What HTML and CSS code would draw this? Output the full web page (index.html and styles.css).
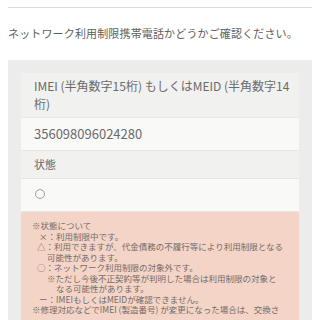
FILE: index.html
```html
<!DOCTYPE html>
<html lang="ja">
<head>
<meta charset="utf-8">
<link rel="stylesheet" href="styles.css">
</head>
<body>
<div class="page">
  <div class="rule"></div>
  <p class="intro">ネットワーク利用制限携帯電話かどうかご確認ください。</p>
  <div class="panel">
    <div class="row label">IMEI (半角数字15桁) もしくはMEID (半角数字14<br>桁)</div>
    <div class="row value num">356098096024280</div>
    <div class="row label short">状態</div>
    <div class="row value"><span class="circle"></span></div>
    <div class="notes">
      <div class="l i0">※状態について</div>
      <div class="l i1">×：利用制限中です。</div>
      <div class="l i1b">△：利用できますが、代金債務の不履行等により利用制限となる</div>
      <div class="l i2">可能性があります。</div>
      <div class="l i1b">○：ネットワーク利用制限の対象外です。</div>
      <div class="l i2">※ただし今後不正契約等が判明した場合は利用制限の対象と</div>
      <div class="l i3">なる可能性があります。</div>
      <div class="l i1">ー：IMEIもしくはMEIDが確認できません。</div>
      <div class="l i0">※修理対応などでIMEI (製造番号) が変更になった場合は、交換さ</div>
    </div>
  </div>
</div>
</body>
</html>
```

FILE: styles.css
```css
html, body {
  margin: 0;
  padding: 0;
  background: #ffffff;
}
body {
  font-family: "Noto Sans CJK JP", "Noto Sans", sans-serif;
  color: #666666;
  height: 320px;
  overflow: hidden;
}
.page {
  padding: 7px 8px 0 8px;
}
.rule {
  border-top: 1px solid #dcdcdc;
}
.intro {
  margin: 16px 0 0 0;
  font-size: 11px;
  letter-spacing: 0.15px;
  line-height: 18px;
  color: #5e5e5e;
  white-space: nowrap;
}
.panel {
  margin-top: 18px;
  background: #ececec;
  padding: 13px 13px 0 13px;
}
.row {
  padding: 4px 13px;
  font-size: 12px;
  line-height: 18px;
  white-space: nowrap;
}
.label {
  background: #f1f1f0;
  color: #6a6a6a;
}
.label.short {
  padding: 4px 13px 5px 13px;
  font-size: 11px;
}
.value {
  background: #f9f9f7;
  border-top: 1px solid #e6e6e6;
  border-bottom: 1px solid #e6e6e6;
  padding: 7px 13px;
  min-height: 18px;
}
.num {
  font-size: 13px;
  color: #6a6a6a;
}
.circle {
  display: inline-block;
  width: 8px;
  height: 8px;
  border: 1px solid #a0a0a0;
  border-radius: 50%;
  margin-top: 3px;
  margin-left: 1px;
  vertical-align: top;
}
.notes {
  background: #f3d4c7;
  padding: 8px 8px 12px 11px;
  font-size: 8.5px;
  line-height: 10.5px;
  color: #766b66;
  white-space: nowrap;
}
.l.i1 { padding-left: 7px; }
.l.i1b { padding-left: 5px; }
.l.i2 { padding-left: 15px; }
.l.i3 { padding-left: 24px; }
```
